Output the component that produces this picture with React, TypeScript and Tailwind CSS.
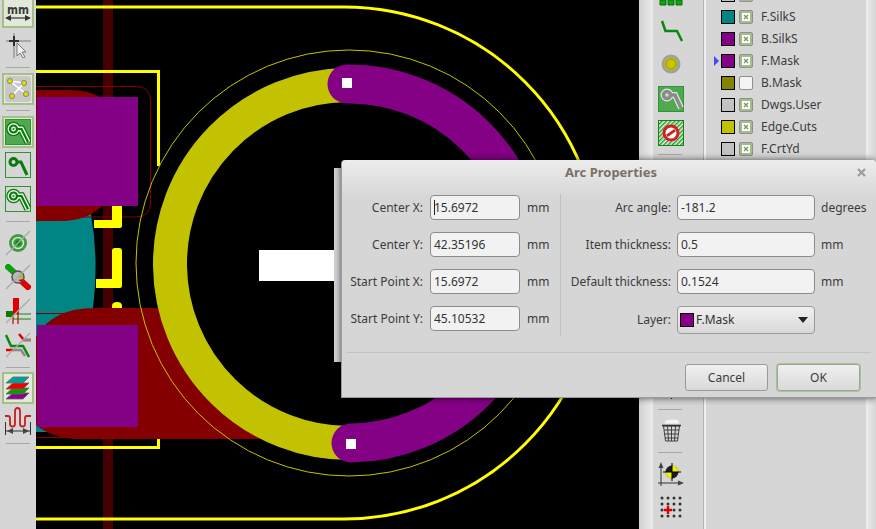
import type { ReactNode } from "react";

const LAYERS = [
  { name: "", color: "bg-[#c2c2c2]", on: true },
  { name: "F.SilkS", color: "bg-[#008484]", on: true },
  { name: "B.SilkS", color: "bg-[#840084]", on: true },
  { name: "F.Mask", color: "bg-[#840084]", on: true, active: true },
  { name: "B.Mask", color: "bg-[#848400]", on: false },
  { name: "Dwgs.User", color: "bg-[#c2c2c2]", on: true },
  { name: "Edge.Cuts", color: "bg-[#c2c200]", on: true },
  { name: "F.CrtYd", color: "bg-[#c2c2c2]", on: true },
];

function Icon({ children, h = 26 }: { children: ReactNode; h?: number }) {
  return (
    <svg width={26} height={h} viewBox={`0 0 26 ${h}`} fill="none">
      {children}
    </svg>
  );
}

function ToolBtn({ children, framed, cls }: { children: ReactNode; framed?: boolean; cls: string }) {
  return (
    <div
      className={`mx-[2px] flex w-[32px] shrink-0 items-center justify-center ${cls} ${
        framed ? "border-2 border-[#a5bf87] bg-[#e2e9da]" : ""
      }`}
    >
      {children}
    </div>
  );
}

function Sep({ cls }: { cls: string }) {
  return (
    <div className={`flex w-[36px] shrink-0 items-center justify-center ${cls}`}>
      <div className="h-px w-[24px] bg-[#a8a8a8]" />
    </div>
  );
}

function PadTrack({ kind }: { kind: "filled" | "plain" | "outline" }) {
  if (kind === "plain") {
    return (
      <Icon>
        <rect x="0.5" y="0.5" width="25" height="25" stroke="#2b962b" />
        <g stroke="#0a7a0a" strokeWidth="3">
          <circle cx="8.500" cy="10" r="3.500" />
          <path d="M12 10h4l6 13" />
        </g>
      </Icon>
    );
  }
  return (
    <Icon>
      <rect
        x="0.5"
        y="0.5"
        width="25"
        height="25"
        fill={kind === "filled" ? "#50a850" : "none"}
        stroke="#2b962b"
      />
      <g stroke="#0a7a0a" strokeWidth="7.500">
        <circle cx="8.500" cy="10" r="3.500" />
        <path d="M12 10h4.500l6.500 13" />
      </g>
      <g stroke="#e8f3e8" strokeWidth="5">
        <circle cx="8.500" cy="10" r="3.500" />
        <path d="M12 10h4.500l6.500 13" />
      </g>
      <g stroke="#0a7a0a" strokeWidth="2.200">
        <circle cx="8.500" cy="10" r="3.500" />
        <path d="M12 10h4.500l6.500 13" />
      </g>
    </Icon>
  );
}

function LeftToolbar() {
  return (
    <div className="flex h-full w-[36px] shrink-0 flex-col overflow-hidden bg-[#d6d6d6]">
      <ToolBtn framed cls="mt-[-5px] h-[33px]">
        <svg width="26" height="26" viewBox="0 0 26 26" fill="none" className="mt-[4px] overflow-visible">
          <text
            x="2"
            y="13"
            fontFamily="DejaVu Sans"
            fontSize="13"
            fontWeight="700"
            fill="#3c3c3c"
            textLength="22"
            lengthAdjust="spacingAndGlyphs"
          >
            mm
          </text>
          <path d="M2 17h22" stroke="#333" strokeWidth="1.200" />
          <path d="M0 17l6-3v6zM26 17l-6-3v6z" fill="#333" />
        </svg>
      </ToolBtn>
      <ToolBtn cls="h-[33px]">
        <Icon>
          <path d="M1 9h25M9 1v25" stroke="#9a9a9a" strokeWidth="1.500" />
          <path d="M4 9h10M9 4v10" stroke="#2e2e2e" strokeWidth="2" />
          <path d="M12 11v13l3-3 3 5 2-1-3-5h4z" fill="#f2f2f2" stroke="#777" />
        </Icon>
      </ToolBtn>
      <Sep cls="h-[12px]" />
      <ToolBtn framed cls="h-[32px]">
        <Icon>
          <rect x="0" y="0" width="26" height="26" rx="3" fill="#c8c8c8" />
          <path d="M5 5l14 2M5 5l16 13M19 7L7 20" stroke="#fff" strokeWidth="1.600" />
          <g fill="#dcdc00" stroke="#777" strokeWidth="0.8">
            <circle cx="5" cy="5" r="2.600" />
            <circle cx="19" cy="7" r="2.600" />
            <circle cx="7" cy="20" r="2.600" />
            <circle cx="21" cy="18" r="2.600" />
          </g>
        </Icon>
      </ToolBtn>
      <Sep cls="h-[11px]" />
      <ToolBtn framed cls="h-[32px]">
        <PadTrack kind="filled" />
      </ToolBtn>
      <ToolBtn cls="h-[34px]">
        <PadTrack kind="plain" />
      </ToolBtn>
      <ToolBtn cls="h-[34px]">
        <PadTrack kind="outline" />
      </ToolBtn>
      <Sep cls="h-[10px]" />
      <ToolBtn cls="h-[34px]">
        <Icon>
          <circle cx="13" cy="13" r="9" fill="#3f9a3f" />
          <circle cx="13" cy="13" r="5.500" fill="none" stroke="#cfe6cf" strokeWidth="1.500" />
          <circle cx="13" cy="13" r="2.500" fill="#0a7a0a" />
          <path d="M1 25L25 1" stroke="#aaa" strokeWidth="1.500" />
        </Icon>
      </ToolBtn>
      <ToolBtn cls="h-[34px]">
        <Icon>
          <path d="M1 1l12 11" stroke="#0aa00a" strokeWidth="6" />
          <path d="M13 14l12 11" stroke="#e00000" strokeWidth="6" />
          <circle cx="13" cy="13" r="6" fill="#b8b8b8" stroke="#555" strokeWidth="1.500" />
          <path d="M13 13l4-3 1 5z" fill="#b8b800" />
          <path d="M13 16l5-1-1 3z" fill="#d00000" />
          <path d="M1 25L25 1" stroke="#aaa" strokeWidth="1.200" />
        </Icon>
      </ToolBtn>
      <ToolBtn cls="h-[34px]">
        <Icon>
          <path d="M8 0h6v16H8z" fill="#e00000" />
          <path d="M1 13h7v6H1z" fill="#0a7a0a" />
          <path d="M8 16h18M8 21h18" stroke="#0a8a0a" strokeWidth="1.200" />
          <path d="M8 16v10M13 16v10" stroke="#c00000" strokeWidth="1.200" />
          <path d="M1 25L25 1" stroke="#aaa" strokeWidth="1.200" />
        </Icon>
      </ToolBtn>
      <ToolBtn cls="h-[34px]">
        <Icon>
          <path d="M14 2l5 6h7" stroke="#e00000" strokeWidth="2.500" />
          <path d="M19 8h7" stroke="#8a8a8a" strokeWidth="2.500" />
          <path d="M1 3l5 11h12l6 11" stroke="#0a8a0a" strokeWidth="2.500" />
          <path d="M1 18h8" stroke="#e00000" strokeWidth="2.500" />
          <path d="M9 18h7l4 6" stroke="#8a8a8a" strokeWidth="2.500" />
          <path d="M1 25L25 1" stroke="#aaa" strokeWidth="1.200" />
        </Icon>
      </ToolBtn>
      <Sep cls="h-[10px]" />
      <ToolBtn framed cls="h-[32px]">
        <Icon>
          <g stroke="#666" strokeWidth="0.8">
            <path d="M8 18h16l-6 6H1z" fill="#8c008c" />
            <path d="M8 13h16l-6 6H1z" fill="#0a9a0a" />
            <path d="M8 8h16l-6 6H1z" fill="#f00000" />
            <path d="M8 2h16l-6 6H1z" fill="#00a0a0" />
          </g>
        </Icon>
      </ToolBtn>
      <ToolBtn cls="h-[34px]">
        <Icon h={28}>
          <path
            d="M0 9h3q2 0 2 2v6q0 2.500 2.500 2.500T10 17V4q0-3 2.500-3T15 4v13q0 2.500 2.500 2.500T20 17v-6q0-2 2-2h4"
            stroke="#c42020"
            strokeWidth="1.800"
          />
          <path d="M0.500 15v13M25.500 15v13M1 24h24" stroke="#333" strokeWidth="1" />
          <path d="M2 24l6-3v6zM24 24l-6-3v6z" fill="#444" />
        </Icon>
      </ToolBtn>
      <Sep cls="h-[10px]" />
    </div>
  );
}

function RightToolbar() {
  return (
    <div className="flex h-full w-[50px] shrink-0 flex-col items-start overflow-hidden bg-[#d6d6d6] pl-[5px]">
      <svg width="26" height="27" viewBox="0 0 26 27" fill="none" className="mt-[-1px] shrink-0">
        <path d="M2 1h6v5H2zM10 1h6v5h-6zM18 1h6v5h-6z" fill="#0ea80e" stroke="#0a6a0a" />
      </svg>
      <svg width="26" height="22" viewBox="0 0 26 22" fill="none" className="mt-[-6px] shrink-0">
        <path d="M4 1l3.500 10h11.500l5 10" stroke="#0a8a0a" strokeWidth="2.500" />
      </svg>
      <svg width="26" height="22" viewBox="0 0 26 22" fill="none" className="mt-[11px] shrink-0">
        <circle cx="13" cy="11" r="8" fill="#c4c400" stroke="#a0a0a0" strokeWidth="3" />
        <circle cx="13" cy="11" r="5" stroke="#8c8c00" strokeWidth="0.8" />
      </svg>
      <svg width="26" height="26" viewBox="0 0 26 26" fill="none" className="mt-[11px] shrink-0">
        <rect x="0.5" y="0.5" width="25" height="25" fill="#50a850" stroke="#2b962b" />
        <g stroke="#dfe6df" strokeWidth="6">
          <circle cx="9" cy="9" r="3.500" />
          <path d="M13 9h4l6 13" />
        </g>
        <g stroke="#8a8a8a" strokeWidth="3.500">
          <circle cx="9" cy="9" r="3.500" />
          <path d="M13 9h4l6 13" />
        </g>
      </svg>
      <svg width="26" height="26" viewBox="0 0 26 26" fill="none" className="mt-[8px] shrink-0">
        <defs>
          <pattern id="hatch" width="3" height="3" patternUnits="userSpaceOnUse" patternTransform="rotate(45)">
            <rect width="3" height="3" fill="#e8f2e8" />
            <rect width="1.500" height="3" fill="#2f9a2f" />
          </pattern>
        </defs>
        <rect x="0.5" y="0.5" width="25" height="25" fill="url(#hatch)" stroke="#0a8a0a" />
        <circle cx="13" cy="13" r="7" fill="#fff" stroke="#d02020" strokeWidth="3" />
        <path d="M8 13h10" stroke="#d02020" strokeWidth="3" transform="rotate(-35 13 13)" />
      </svg>
      <div className="mt-[8px] h-px w-[24px] shrink-0 bg-[#a8a8a8]" />
      <div className="flex-1" />
      <div className="mb-[10px] ml-[13px] h-[2px] w-px bg-[#222]" />
      <div className="h-px w-[24px] shrink-0 bg-[#a8a8a8]" />
      <svg width="21" height="25" viewBox="0 0 21 25" fill="none" className="ml-[3px] mt-[8px] shrink-0">
        <path d="M3 6c0-3 3-5 8-5s7 1 7 3l1 2H3z" fill="#f4f4f4" stroke="#d8d8d8" />
        <path d="M1 7.500h19" stroke="#333" strokeWidth="1.600" />
        <path
          d="M2.500 8l2 15h12l2-15zM6.500 8l1 15M10.500 8v15M14.500 8l-1 15M3 12h15M3.500 16h14M4 20h13"
          stroke="#333"
          strokeWidth="0.9"
        />
      </svg>
      <div className="mt-[9px] h-px w-[24px] shrink-0 bg-[#a8a8a8]" />
      <svg width="26" height="27" viewBox="0 0 26 27" fill="none" className="mt-[7px] shrink-0">
        <path d="M3 26V6M0 23h22" stroke="#333" strokeWidth="1" />
        <path d="M3 2l-2.500 6h5zM26 23l-6-2.500v5z" fill="#444" />
        <circle cx="14" cy="12" r="6.500" fill="#1c1c1c" />
        <path d="M14 12V5.500A6.500 6.500 0 0 1 20.500 12zM14 12v6.500A6.500 6.500 0 0 1 7.500 12z" fill="#f0f000" />
        <path d="M5 12h18M14 3v18" stroke="#000" strokeWidth="1" />
      </svg>
      <svg width="24" height="24" viewBox="0 0 24 24" className="mb-[9px] ml-[1px] mt-[9px] shrink-0">
        <g fill="#333">
          {[2, 8, 14, 20].map((y) =>
            [3, 9, 15, 21].map((x) => <circle key={`${x}-${y}`} cx={x} cy={y} r="1.500" />),
          )}
        </g>
        <path d="M5 14h8M9 10v8" stroke="#e00000" strokeWidth="2.400" />
      </svg>
    </div>
  );
}

function LayerPanel() {
  return (
    <div className="h-full w-[160px] shrink-0 overflow-hidden bg-[#d6d6d6]">
      <div className="mt-[-16px] flex flex-col">
        {LAYERS.map((l, i) => (
          <div key={i} className="flex h-[22px] items-center">
            <div className="flex w-[15px] justify-center pl-[6px]">
              {l.active && (
                <span className="h-0 w-0 border-y-[5px] border-l-[5px] border-y-transparent border-l-[#4646ff]" />
              )}
            </div>
            <span className={`h-[14px] w-[14px] border border-black ${l.color}`} />
            <span
              className={`ml-[4px] flex h-[14px] w-[14px] items-center justify-center rounded-[2px] border border-[#8f8f8f] ${
                l.on ? "bg-[#a3bd88]" : "bg-[#f4f4f4]"
              }`}
            >
              {l.on && (
                <span className="flex h-[8px] w-[8px] items-center justify-center bg-white">
                  <svg width="6" height="6" viewBox="0 0 6 6">
                    <path d="M1 1l4 4M5 1L1 5" stroke="#7d8f68" strokeWidth="1.300" />
                  </svg>
                </span>
              )}
            </span>
            <span className="ml-[8px] text-[12px] text-[#3c3c3c]">{l.name}</span>
          </div>
        ))}
      </div>
    </div>
  );
}

function Canvas() {
  return (
    <div className="relative h-full w-[603px] shrink-0 overflow-hidden bg-black">
      <svg width="603" height="529" viewBox="36 0 603 529" fill="none" className="block">
        <rect x="103" y="0" width="10" height="529" fill="#470000" />
        <path d="M36 214H91Q99 260 93 308L90 345H36z" fill="#008484" />
        <path d="M36 340h40v92H36z" fill="#008484" />
        <path d="M36 90H68Q95 90 107 103V200Q92 221 60 221H36z" fill="#840000" />
        <path d="M158.500 71.500V166M36 71.500H160" stroke="#ffff00" strokeWidth="3" />
        <path d="M36 447.500H158.500V436" stroke="#ffff00" strokeWidth="3" />
        <path d="M36 337Q52 308 95 308H168L240 420L268 439H75Q50 437 36 425z" fill="#840000" />
        <g stroke="#840000" strokeWidth="1">
          <path d="M36 86.500H136Q150.500 86.500 150.500 101V202Q150.500 217 136 217H36" />
          <path d="M36 313.500H95M36 437.500H110" />
        </g>
        <g fill="#ffff00">
          <path d="M112 206h10v20q0 2-2 2H94v-8h18z" />
          <path d="M115 248h4q3 0 3 3v35q0 2-2 2H96v-9h16v-28q0-3 3-3z" />
          <path d="M112 308v-2q0-4 5-4t5 4v2z" />
        </g>
        <rect x="37" y="97" width="101" height="109" fill="#840084" />
        <rect x="37" y="325" width="101" height="102" fill="#840084" />
        <path d="M36 7H344A256 256 0 0 1 344 519H36" stroke="#ffff00" strokeWidth="3" />
        <circle cx="349" cy="263" r="213" stroke="#c2c200" strokeWidth="1" />
        <path d="M347 85A179 179 0 0 0 351 443" stroke="#c2c200" strokeWidth="34" />
        <path d="M347 84A179 179 0 0 1 351 443" stroke="#840084" strokeWidth="39" strokeLinecap="round" />
        <rect x="342" y="78" width="10" height="10" fill="#fff" />
        <rect x="346" y="439" width="10" height="10" fill="#fff" />
        <rect x="259" y="250" width="76" height="31" fill="#fff" />
        <rect x="334" y="168" width="8" height="194" fill="#d4d4d4" />
      </svg>
    </div>
  );
}

function Field({
  label,
  value,
  unit,
  caret,
  wide,
}: {
  label: string;
  value: string;
  unit: string;
  caret?: boolean;
  wide?: boolean;
}) {
  return (
    <>
      <label className="justify-self-end whitespace-nowrap text-[#3c3c3c]">{label}</label>
      <div className={`relative h-[25px] ${wide ? "w-[138px]" : "w-[90px]"}`}>
        <input
          readOnly
          value={value}
          className="h-full w-full rounded-[4px] border border-[#8c8c8c] bg-[#f2f2f2] pl-[3px] text-[#333] outline-none"
        />
        {caret && <span className="absolute left-[4px] top-[5px] h-[15px] w-px bg-[#222]" />}
      </div>
      <span className="text-[#3c3c3c]">{unit}</span>
    </>
  );
}

function ArcDialog() {
  return (
    <div className="absolute left-[341px] top-[160px] flex h-[238px] w-[535px] flex-col rounded-t-[4px] border-b border-l border-[#9a9a9a] bg-[linear-gradient(#ececec,#d6d6d6_40px)] font-['Noto_Sans',sans-serif] text-[12px] shadow-[0_0_7px_rgba(0,0,0,0.65)]">
      <div className="relative flex h-[26px] shrink-0 items-center justify-center pl-[4px] text-[13px] font-bold text-[#7b7068]">
        Arc Properties
        <svg width="9" height="9" viewBox="0 0 9 9" className="absolute right-[10px] top-[8px]">
          <path d="M1 1l7 7M8 1L1 8" stroke="#9c9c9c" strokeWidth="2.200" />
        </svg>
      </div>
      <div className="ml-[6px] mt-[9px] flex h-[142px] shrink-0">
        <div className="grid w-[212px] grid-cols-[75px_90px_auto] content-start items-center gap-x-[7px] gap-y-[12px]">
          <Field label="Center X:" value="15.6972" unit="mm" caret />
          <Field label="Center Y:" value="42.35196" unit="mm" />
          <Field label="Start Point X:" value="15.6972" unit="mm" />
          <Field label="Start Point Y:" value="45.10532" unit="mm" />
        </div>
        <div className="mt-[-1px] h-full w-px bg-[#c0c0c0]" />
        <div className="ml-[10px] grid grid-cols-[100px_138px_auto] content-start items-center gap-x-[6px] gap-y-[12px]">
          <Field wide label="Arc angle:" value="-181.2" unit="degrees" />
          <Field wide label="Item thickness:" value="0.5" unit="mm" />
          <Field wide label="Default thickness:" value="0.1524" unit="mm" />
          <label className="justify-self-end text-[#3c3c3c]">Layer:</label>
          <div className="flex h-[28px] w-[138px] items-center rounded-[4px] border border-[#9a9a9a] bg-[linear-gradient(#f0f0f0,#d9d9d9)] pl-[2px] pr-[6px] text-[#333]">
            <span className="h-[14px] w-[14px] border border-black bg-[#840084]" />
            <span className="ml-[2px] flex-1">F.Mask</span>
            <span className="h-0 w-0 border-x-[5px] border-t-[6px] border-x-transparent border-t-[#222]" />
          </div>
        </div>
      </div>
      <div className="ml-[5px] mr-[5px] mt-[15px] h-px shrink-0 bg-[#c2c2c2]" />
      <div className="mr-[16px] mt-[11px] flex justify-end gap-[9px]">
        <button
          type="button"
          className="h-[27px] w-[83px] rounded-[3px] border border-[#9a9a9a] bg-[linear-gradient(#f0f0f0,#d9d9d9)] text-[#3c3c3c]"
        >
          Cancel
        </button>
        <button
          type="button"
          className="h-[27px] w-[83px] rounded-[3px] border border-[#a0a0a0] bg-[linear-gradient(#f0f0f0,#d9d9d9)] text-[#3c3c3c] shadow-[0_0_0_1px_#a5c98a]"
        >
          OK
        </button>
      </div>
    </div>
  );
}

export default function App() {
  return (
    <div className="relative flex h-[529px] w-[876px] overflow-hidden bg-[#d6d6d6] font-['Noto_Sans',sans-serif]">
      <LeftToolbar />
      <Canvas />
      <div className="h-full w-[14px] shrink-0 bg-gradient-to-r from-[#d2d2d2] to-[#ececec]" />
      <RightToolbar />
      <div className="h-full w-[3px] shrink-0 border-l border-[#b4b4b4] bg-[#efefef]" />
      <LayerPanel />
      <div className="h-full w-[10px] shrink-0 bg-gradient-to-r from-[#ececec] to-[#d6d6d6]" />
      <ArcDialog />
    </div>
  );
}
